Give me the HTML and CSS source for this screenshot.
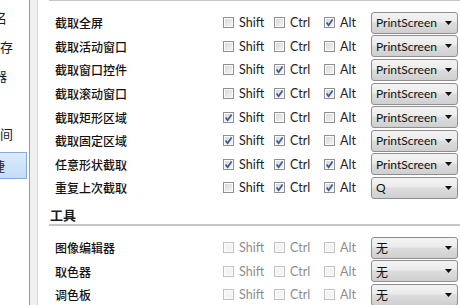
FILE: index.html
```html
<!DOCTYPE html>
<html lang="zh-CN">
<head>
<meta charset="utf-8">
<link rel="stylesheet" href="styles.css">
</head>
<body>
<div class="app">
  <nav class="sidebar">
    <div class="nav-item off-a">命名</div>
    <div class="nav-item off-b">保存</div>
    <div class="nav-item off-a">编辑器</div>
    <div class="nav-item off-b"></div>
    <div class="nav-item off-b">时间</div>
    <div class="nav-item selected off-a">快捷</div>
  </nav>
  <div class="divider"></div>
  <main class="main">
    <section class="section first">
      <div class="section-head">截图</div>
      <div class="rows">
        <div class="row"><span class="label">截取全屏</span>
          <label class="cb"><span class="box"></span>Shift</label>
          <label class="cb"><span class="box"></span>Ctrl</label>
          <label class="cb"><span class="box checked"><svg viewBox="0 0 9 9"><path d="M1.6 4.4 L3.6 7.2 L7.6 1.4"/></svg></span>Alt</label>
          <div class="combo"><span>PrintScreen</span><svg class="arrow" viewBox="0 0 7 4"><polygon points="0,0 7,0 3.5,4"/></svg></div>
        </div>
        <div class="row"><span class="label">截取活动窗口</span>
          <label class="cb"><span class="box"></span>Shift</label>
          <label class="cb"><span class="box"></span>Ctrl</label>
          <label class="cb"><span class="box"></span>Alt</label>
          <div class="combo"><span>PrintScreen</span><svg class="arrow" viewBox="0 0 7 4"><polygon points="0,0 7,0 3.5,4"/></svg></div>
        </div>
        <div class="row"><span class="label">截取窗口控件</span>
          <label class="cb"><span class="box"></span>Shift</label>
          <label class="cb"><span class="box checked"><svg viewBox="0 0 9 9"><path d="M1.6 4.4 L3.6 7.2 L7.6 1.4"/></svg></span>Ctrl</label>
          <label class="cb"><span class="box"></span>Alt</label>
          <div class="combo"><span>PrintScreen</span><svg class="arrow" viewBox="0 0 7 4"><polygon points="0,0 7,0 3.5,4"/></svg></div>
        </div>
        <div class="row"><span class="label">截取滚动窗口</span>
          <label class="cb"><span class="box"></span>Shift</label>
          <label class="cb"><span class="box checked"><svg viewBox="0 0 9 9"><path d="M1.6 4.4 L3.6 7.2 L7.6 1.4"/></svg></span>Ctrl</label>
          <label class="cb"><span class="box checked"><svg viewBox="0 0 9 9"><path d="M1.6 4.4 L3.6 7.2 L7.6 1.4"/></svg></span>Alt</label>
          <div class="combo"><span>PrintScreen</span><svg class="arrow" viewBox="0 0 7 4"><polygon points="0,0 7,0 3.5,4"/></svg></div>
        </div>
        <div class="row"><span class="label">截取矩形区域</span>
          <label class="cb"><span class="box checked"><svg viewBox="0 0 9 9"><path d="M1.6 4.4 L3.6 7.2 L7.6 1.4"/></svg></span>Shift</label>
          <label class="cb"><span class="box"></span>Ctrl</label>
          <label class="cb"><span class="box"></span>Alt</label>
          <div class="combo"><span>PrintScreen</span><svg class="arrow" viewBox="0 0 7 4"><polygon points="0,0 7,0 3.5,4"/></svg></div>
        </div>
        <div class="row"><span class="label">截取固定区域</span>
          <label class="cb"><span class="box checked"><svg viewBox="0 0 9 9"><path d="M1.6 4.4 L3.6 7.2 L7.6 1.4"/></svg></span>Shift</label>
          <label class="cb"><span class="box checked"><svg viewBox="0 0 9 9"><path d="M1.6 4.4 L3.6 7.2 L7.6 1.4"/></svg></span>Ctrl</label>
          <label class="cb"><span class="box"></span>Alt</label>
          <div class="combo"><span>PrintScreen</span><svg class="arrow" viewBox="0 0 7 4"><polygon points="0,0 7,0 3.5,4"/></svg></div>
        </div>
        <div class="row"><span class="label">任意形状截取</span>
          <label class="cb"><span class="box checked"><svg viewBox="0 0 9 9"><path d="M1.6 4.4 L3.6 7.2 L7.6 1.4"/></svg></span>Shift</label>
          <label class="cb"><span class="box checked"><svg viewBox="0 0 9 9"><path d="M1.6 4.4 L3.6 7.2 L7.6 1.4"/></svg></span>Ctrl</label>
          <label class="cb"><span class="box checked"><svg viewBox="0 0 9 9"><path d="M1.6 4.4 L3.6 7.2 L7.6 1.4"/></svg></span>Alt</label>
          <div class="combo"><span>PrintScreen</span><svg class="arrow" viewBox="0 0 7 4"><polygon points="0,0 7,0 3.5,4"/></svg></div>
        </div>
        <div class="row"><span class="label">重复上次截取</span>
          <label class="cb"><span class="box"></span>Shift</label>
          <label class="cb"><span class="box checked"><svg viewBox="0 0 9 9"><path d="M1.6 4.4 L3.6 7.2 L7.6 1.4"/></svg></span>Ctrl</label>
          <label class="cb"><span class="box checked"><svg viewBox="0 0 9 9"><path d="M1.6 4.4 L3.6 7.2 L7.6 1.4"/></svg></span>Alt</label>
          <div class="combo"><span>Q</span><svg class="arrow" viewBox="0 0 7 4"><polygon points="0,0 7,0 3.5,4"/></svg></div>
        </div>
      </div>
    </section>
    <section class="section">
      <div class="section-head">工具</div>
      <div class="rows">
        <div class="row disabled"><span class="label">图像编辑器</span>
          <label class="cb"><span class="box"></span>Shift</label>
          <label class="cb"><span class="box"></span>Ctrl</label>
          <label class="cb"><span class="box"></span>Alt</label>
          <div class="combo"><span>无</span><svg class="arrow" viewBox="0 0 7 4"><polygon points="0,0 7,0 3.5,4"/></svg></div>
        </div>
        <div class="row disabled"><span class="label">取色器</span>
          <label class="cb"><span class="box"></span>Shift</label>
          <label class="cb"><span class="box"></span>Ctrl</label>
          <label class="cb"><span class="box"></span>Alt</label>
          <div class="combo"><span>无</span><svg class="arrow" viewBox="0 0 7 4"><polygon points="0,0 7,0 3.5,4"/></svg></div>
        </div>
        <div class="row disabled"><span class="label">调色板</span>
          <label class="cb"><span class="box"></span>Shift</label>
          <label class="cb"><span class="box"></span>Ctrl</label>
          <label class="cb"><span class="box"></span>Alt</label>
          <div class="combo"><span>无</span><svg class="arrow" viewBox="0 0 7 4"><polygon points="0,0 7,0 3.5,4"/></svg></div>
        </div>
      </div>
    </section>
  </main>
</div>
</body>
</html>
```
FILE: styles.css
```css
* { box-sizing: border-box; }
html, body {
  margin: 0;
  width: 460px;
  height: 305px;
  overflow: hidden;
  background: #fff;
}
body {
  font-family: "Noto Sans CJK SC", sans-serif;
  font-size: 12px;
  color: #1a1a1a;
}
.app {
  display: flex;
  height: 305px;
}
.sidebar {
  width: 30px;
  flex: none;
  overflow: hidden;
  padding-top: 4px;
  border-right: 1px solid #9a9a9a;
}
.nav-item {
  height: 29px;
  line-height: 27px;
  white-space: nowrap;
  display: flex;
  justify-content: flex-end;
  font-size: 13px;
}
.nav-item.off-a { padding-right: 22px; }
.nav-item.off-b { padding-right: 16px; }
.nav-item.selected {
  width: 27px;
  height: 27px;
  margin-top: 3px;
  background: linear-gradient(#dcebfc, #c4dcf6);
  border: 1px solid #84acdd;
  border-left: none;
  padding-right: 21px;
  line-height: 25px;
}
.divider {
  width: 8px;
  flex: none;
  background: #f0f0f0;
  border-right: 1px solid #d8d8d8;
}
.main {
  flex: 1;
  padding-left: 11px;
  min-width: 0;
}
.section.first { margin-top: -20px; }
.section + .section { margin-top: 5px; }
.section-head {
  height: 21px;
  line-height: 19px;
  padding-left: 1px;
  font-weight: bold;
  font-size: 13px;
  border-bottom: 2px solid #c6c6c6;
}
.rows {
  padding-top: 10px;
  padding-left: 6px;
}
.row {
  height: 23.6px;
  display: grid;
  grid-template-columns: 168px 51px 50px 47px 87px;
  align-items: center;
}
.label {
  white-space: nowrap;
  color: #111;
  font-weight: 500;
}
.cb {
  display: flex;
  align-items: center;
  gap: 5px;
  color: #222;
  font-family: Lato, "Noto Sans CJK SC", sans-serif;
  font-size: 12.5px;
}
.box {
  width: 11px;
  height: 11px;
  border: 1px solid #8f8f8f;
  background: linear-gradient(135deg, #d6d6d6, #f6f6f6);
  box-shadow: inset 0 0 0 1px #fbfbfb;
  display: flex;
}
.box svg {
  width: 9px;
  height: 9px;
}
.box path {
  fill: none;
  stroke: #3d5a9c;
  stroke-width: 1.7;
}
.combo {
  height: 22px;
  border: 1px solid #8e8e8e;
  border-radius: 3px;
  background: linear-gradient(#f3f3f3 0%, #ebebeb 45%, #dddddd 50%, #cfcfcf 100%);
  display: flex;
  align-items: center;
  justify-content: space-between;
  padding: 0 5px 0 4px;
  color: #111;
  font-family: Lato, "Noto Sans CJK SC", sans-serif;
  font-size: 12px;
}
.arrow {
  width: 7px;
  height: 4px;
}
.arrow polygon { fill: #111; }
.disabled .cb { color: #8d8d8d; }
.disabled .box {
  border-color: #c2c2c2;
  background: #f4f4f4;
}
```
